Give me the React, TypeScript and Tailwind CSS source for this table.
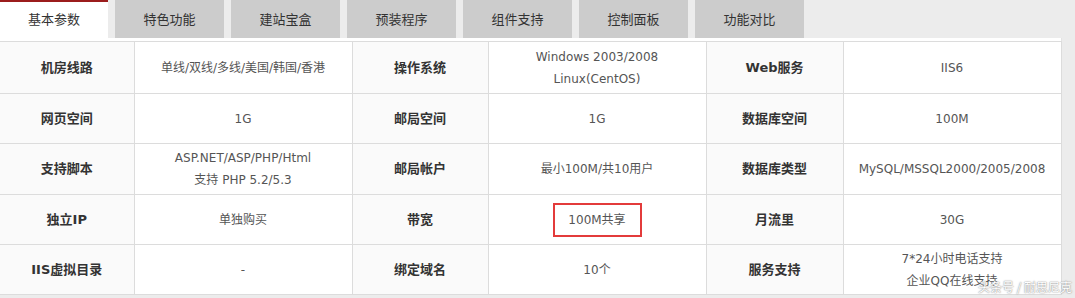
const tabs = ['基本参数', '特色功能', '建站宝盒', '预装程序', '组件支持', '控制面板', '功能对比'];

type Cell = { label: string; value: string[]; highlight?: boolean };

const rows: { h: string; cells: Cell[] }[] = [
  {
    h: 'h-[52px]',
    cells: [
      { label: '机房线路', value: ['单线/双线/多线/美国/韩国/香港'] },
      { label: '操作系统', value: ['Windows 2003/2008', 'Linux(CentOS)'] },
      { label: 'Web服务', value: ['IIS6'] },
    ],
  },
  {
    h: 'h-[50px]',
    cells: [
      { label: '网页空间', value: ['1G'] },
      { label: '邮局空间', value: ['1G'] },
      { label: '数据库空间', value: ['100M'] },
    ],
  },
  {
    h: 'h-[51px]',
    cells: [
      { label: '支持脚本', value: ['ASP.NET/ASP/PHP/Html', '支持 PHP 5.2/5.3'] },
      { label: '邮局帐户', value: ['最小100M/共10用户'] },
      { label: '数据库类型', value: ['MySQL/MSSQL2000/2005/2008'] },
    ],
  },
  {
    h: 'h-[50px]',
    cells: [
      { label: '独立IP', value: ['单独购买'] },
      { label: '带宽', value: ['100M共享'], highlight: true },
      { label: '月流里', value: ['30G'] },
    ],
  },
  {
    h: 'h-[50px]',
    cells: [
      { label: 'IIS虚拟目录', value: ['-'] },
      { label: '绑定域名', value: ['10个'] },
      { label: '服务支持', value: ['7*24小时电话支持', '企业QQ在线支持'] },
    ],
  },
];

export default function App() {
  return (
    <div className="relative w-[1075px] h-[298px] overflow-hidden bg-[#ececec] font-['DejaVu_Sans','Noto_Sans_CJK_SC',sans-serif]">
      {/* Tabs */}
      <div className="flex h-[38px] gap-[7px]">
        {tabs.map((t, i) => (
          <div
            key={t}
            className={
              i === 0
                ? 'w-[108px] h-[38px] bg-white border-t-2 border-[#9b1c1c] flex items-center justify-center text-[13px] text-[#333] pb-[1px]'
                : 'w-[109px] h-[38px] bg-[#cccccc] flex items-center justify-center text-[13px] text-[#333] pt-[1px]'
            }
          >
            {t}
          </div>
        ))}
      </div>

      {/* Spec table */}
      <div className="w-[1062px] bg-white pt-[3px] border-r border-[#e4e4e4]">
        <table className="border-collapse table-fixed w-[1061px]">
          <colgroup>
            <col className="w-[134px]" />
            <col className="w-[218px]" />
            <col className="w-[136px]" />
            <col className="w-[218px]" />
            <col className="w-[137px]" />
            <col className="w-[218px]" />
          </colgroup>
          <tbody>
            {rows.map((r, ri) => (
              <tr key={ri} className={r.h}>
                {r.cells.flatMap((c, ci) => [
                  <td
                    key={ci + 'l'}
                    className="border border-[#dcdcdc] first:border-l-0 bg-[#fafafa] text-center text-[13px] font-bold text-[#333]"
                  >
                    {c.label}
                  </td>,
                  <td
                    key={ci + 'v'}
                    className="border border-[#dcdcdc] bg-white text-center text-[12px] leading-[22px] text-[#555]"
                  >
                    {c.highlight ? (
                      <div className="mx-auto w-[89px] h-[34px] border-2 border-[#e33b3b] flex items-center justify-center">
                        {c.value[0]}
                      </div>
                    ) : (
                      c.value.map((v) => <div key={v}>{v}</div>)
                    )}
                  </td>,
                ])}
              </tr>
            ))}
          </tbody>
        </table>
      </div>

      {/* Watermark */}
      <div className="absolute left-[978px] top-[281px] text-[12px] leading-none text-white [text-shadow:0_0_2px_#999,0_0_1px_#888] font-['Noto_Sans_CJK_SC',sans-serif]">
        头条号 / 耐思尼克
      </div>
    </div>
  );
}
